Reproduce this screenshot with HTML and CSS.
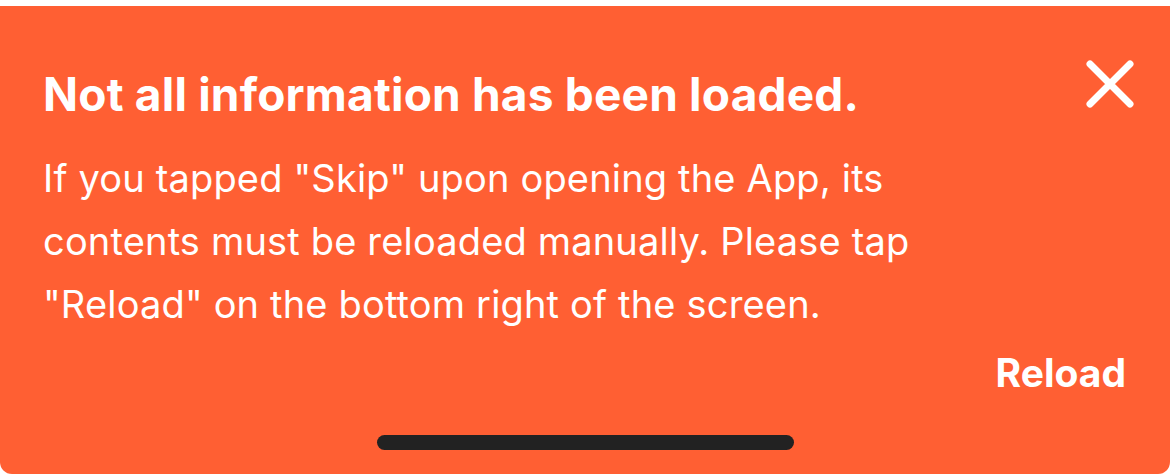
FILE: index.html
```html
<!DOCTYPE html>
<html lang="en">
<head>
  <meta charset="UTF-8">
  <title>Not all information has been loaded</title>
  <link rel="stylesheet" href="styles.css">
</head>
<body>
  <div class="banner">
    <div class="banner-head">
      <h1>Not all information has been loaded.</h1>
      <button class="close-btn" aria-label="Close">
        <svg width="48" height="48" viewBox="0 0 48 48">
          <path d="M4 4 L44 44 M44 4 L4 44" stroke="#fff" stroke-width="7" stroke-linecap="round" fill="none"/>
        </svg>
      </button>
    </div>
    <p class="message">If you tapped "Skip" upon opening the App, its contents must be reloaded manually. Please tap "Reload" on the bottom right of the screen.</p>
    <div class="actions">
      <button class="reload-btn">Reload</button>
    </div>
    <div class="home-bar"></div>
  </div>
</body>
</html>
```

FILE: styles.css
```css
* {
  margin: 0;
  padding: 0;
  box-sizing: border-box;
}

body {
  background: #ffffff;
  font-family: Inter, "Noto Sans", sans-serif;
  color: #ffffff;
  padding-top: 6px;
}

.banner {
  background: #ff5f33;
  height: 468px;
  border-radius: 0 0 12px 12px;
  padding: 61px 36px 0 43px;
  display: flex;
  flex-direction: column;
}

.banner-head {
  display: flex;
  justify-content: space-between;
  align-items: flex-start;
}

h1 {
  font-size: 46px;
  font-weight: 700;
  line-height: 55px;
  letter-spacing: 0.2px;
}

.close-btn {
  background: none;
  border: none;
  width: 48px;
  height: 48px;
  margin-top: -7px;
  cursor: pointer;
}

.message {
  font-size: 38px;
  line-height: 63px;
  letter-spacing: 0.17px;
  max-width: 900px;
  margin-top: 25px;
}

.actions {
  display: flex;
  justify-content: flex-end;
  margin-top: 14px;
}

.reload-btn {
  background: none;
  border: none;
  color: #ffffff;
  font-family: inherit;
  font-size: 39px;
  font-weight: 700;
  line-height: 1.2;
  padding: 0 8px 0 0;
  cursor: pointer;
}

.home-bar {
  width: 417px;
  height: 15px;
  background: #222222;
  border-radius: 8px;
  align-self: center;
  margin: auto 6px 24px 0;
}
```
